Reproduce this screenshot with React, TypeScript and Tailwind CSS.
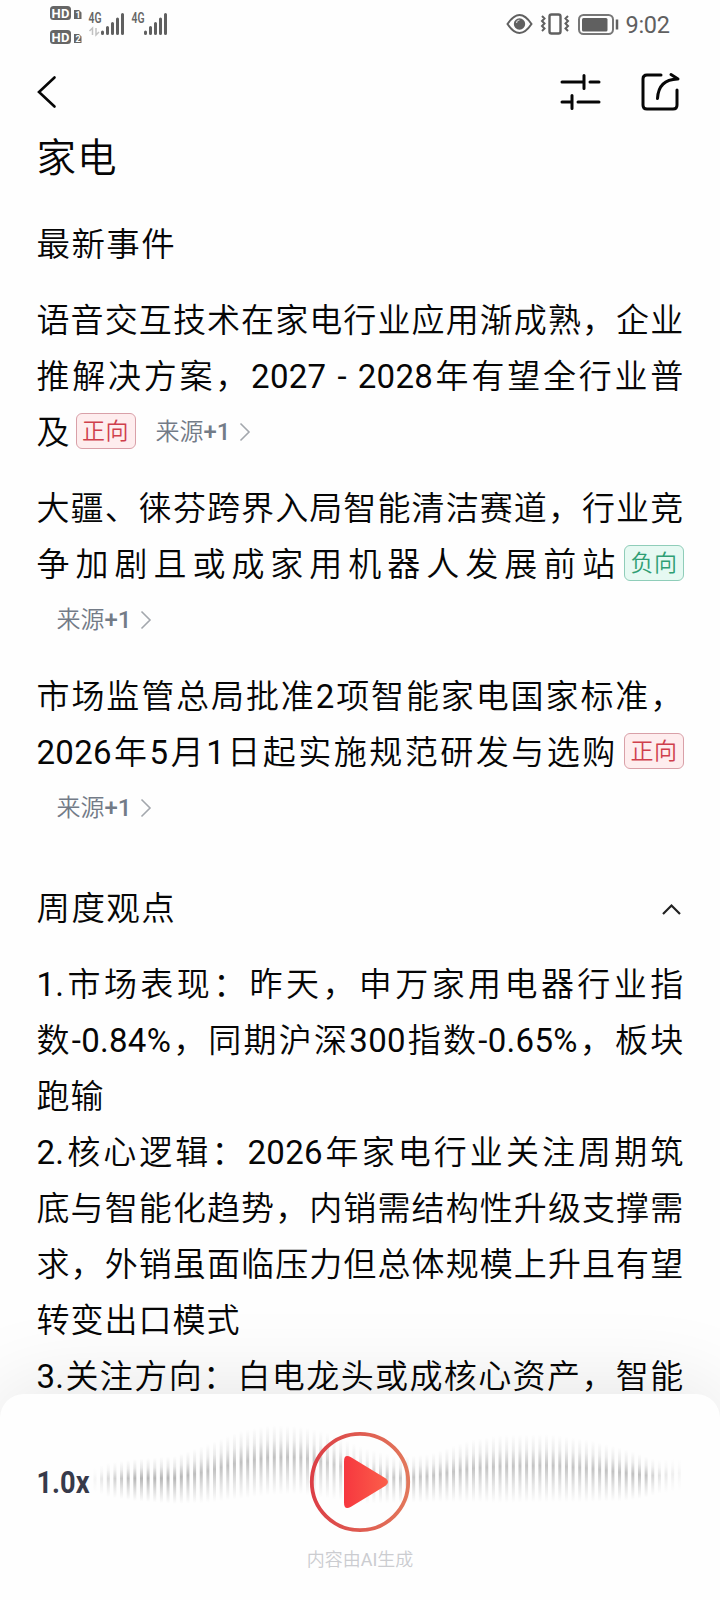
import React from "react";

const CJK = "font-['Roboto','Noto_Sans_CJK_SC',sans-serif]";

// Latin runs are set in the regular weight, Chinese text in the demi-light one
function Mixed({ text }: { text: string }) {
  return (
    <>
      {text.split(/([0-9A-Za-z.%-]+(?: - [0-9]+)?)/).map((run, i) =>
        i % 2 ? (
          <span key={i} className="font-normal">
            {run}
          </span>
        ) : (
          run
        ),
      )}
    </>
  );
}

function Line({ children, end = false }: { children: React.ReactNode; end?: boolean }) {
  return (
    <div
      className={
        end
          ? "flex h-14 items-center whitespace-pre tracking-[1px]"
          : "h-14 w-[647px] whitespace-pre leading-[56px] [text-align-last:justify]"
      }
    >
      {typeof children === "string" ? <Mixed text={children} /> : children}
    </div>
  );
}

function Tag({ kind }: { kind: "up" | "down" }) {
  const tone =
    kind === "up"
      ? "border-[#d9a0a8] bg-[#feedee] text-[#cf3f4c]"
      : "border-[#8fcdb9] bg-[#e6f9f2] text-[#2f9e74]";
  return (
    <span
      className={`mb-1 inline-flex h-9 w-[60px] shrink-0 items-center justify-center rounded-[6px] border text-[23px] leading-none tracking-[0.5px] ${tone}`}
    >
      {kind === "up" ? "正向" : "负向"}
    </span>
  );
}

function TaggedLine({ text, kind }: { text: string; kind: "up" | "down" }) {
  return (
    <div className="flex h-14 w-[647.5px] items-center justify-between">
      <span className="w-[579px] whitespace-pre leading-[56px] [text-align-last:justify]">
        <Mixed text={text} />
      </span>
      <Tag kind={kind} />
    </div>
  );
}

function Source() {
  return (
    <span className="mb-[2px] ml-5 inline-flex items-center text-[24px] leading-none tracking-normal text-[#737b87]">
      来源<span className="font-medium">+1</span>
      <svg width="12" height="20" viewBox="0 0 12 20" className="ml-[9px]" fill="none" stroke="#a3a7ad" strokeWidth="1.6">
        <path d="M1.5 1.5 10 10 1.5 18.5" />
      </svg>
    </span>
  );
}

function StatusBar() {
  return (
    <svg width="720" height="50" viewBox="0 0 720 50" className="block shrink-0" fill="none">
      <g fontFamily="Roboto" fontWeight="700" fill="#fff" fontSize="13">
        <rect x="50" y="6" width="21" height="14" rx="3.5" fill="#666" />
        <text x="51.5" y="17.6" textLength="18">HD</text>
        <rect x="50" y="30" width="21" height="14" rx="3.5" fill="#666" />
        <text x="51.5" y="41.6" textLength="18">HD</text>
        <path d="M74 10h5l2.500 2.500V19H74zM74 34h5l2.500 2.500V43H74z" fill="#666" />
        <text x="75.500" y="17.800" fontSize="9">1</text>
        <text x="75.500" y="41.800" fontSize="9">2</text>
      </g>
      <g fontFamily="Roboto" fontWeight="600" fill="#666" fontSize="14">
        <text x="88.500" y="23" textLength="13" lengthAdjust="spacingAndGlyphs">4G</text>
        <text x="131.500" y="23" textLength="13" lengthAdjust="spacingAndGlyphs">4G</text>
      </g>
      <path d="M92.500 35v-7l-3 3M96 28v7l3-3" stroke="#c2c2c2" strokeWidth="1.500" />
      <g stroke="#606060" strokeWidth="3" strokeLinecap="round">
        <path d="M102.500 32v1.500M107.500 27.500v6M112.500 23.500v10M117.500 19v14.500M122.500 14.500v19" />
        <path d="M145.500 32v1.500M150.500 27.500v6M155.500 23.500v10M160.500 19v14.500M165.500 14.500v19" />
      </g>
      <g stroke="#606060" strokeWidth="2">
        <path d="M507.500 24q12-18 24 0q-12 18-24 0Z" />
        <circle cx="519.500" cy="24" r="5.700" fill="#606060" stroke="none" />
        <path d="M516.500 23q0-2.500 3-3" stroke="#ccc" strokeWidth="1.200" />
        <rect x="549.500" y="14.500" width="11" height="19" rx="2" strokeWidth="2.400" />
        <path d="m542 16 2.500 2.500-2.500 2.500 2.500 2.500-2.500 2.500 2.500 2.500-2.500 2.500M568 16l-2.500 2.500 2.500 2.500-2.500 2.500 2.500 2.500-2.500 2.500 2.500 2.500" />
        <rect x="579" y="15" width="34" height="19" rx="4.500" stroke="#777" />
        <rect x="582" y="18" width="25.500" height="13.500" rx="1.500" fill="#606060" stroke="none" />
        <path d="M617 19.500v10" strokeWidth="2.500" />
      </g>
      <text x="625.500" y="33" fontFamily="Roboto" fontWeight="400" fontSize="23.500" fill="#606060" textLength="44.500">9:02</text>
    </svg>
  );
}

// Wave envelope: x, centre, half height, opacity
const STOPS: [number, number, number, number][] = [
  [94, 1480, 12, 0.1],
  [108, 1480, 17, 0.5],
  [135, 1480, 21, 1],
  [175, 1480, 24, 1],
  [205, 1474, 29, 0.85],
  [240, 1465, 34, 0.85],
  [270, 1460, 35, 0.85],
  [300, 1460, 34, 0.8],
  [330, 1466, 33, 0.7],
  [365, 1476, 28, 0.65],
  [400, 1480, 23, 0.75],
  [430, 1478, 24, 0.8],
  [470, 1471, 31, 0.8],
  [500, 1469, 34, 0.8],
  [550, 1468, 34, 0.8],
  [590, 1471, 31, 0.8],
  [625, 1475, 26, 0.85],
  [645, 1477, 21, 0.85],
  [658, 1477, 17, 0.4],
  [685, 1474, 16, 0.05],
];

function sample(x: number) {
  const i = Math.max(0, STOPS.findIndex((s, k) => k + 1 < STOPS.length && x <= STOPS[k + 1][0]));
  const a = STOPS[i];
  const b = STOPS[i + 1];
  const t = (x - a[0]) / (b[0] - a[0]);
  return [1, 2, 3].map((k) => a[k] + (b[k] - a[k]) * t);
}

function Player() {
  const bars: number[] = [];
  for (let x = 95; x < 685; x += 6.64) bars.push(x);
  return (
    <div className="relative h-[206px] w-full shrink-0 rounded-t-[24px] bg-[#fefefe] shadow-[0_0_90px_rgba(0,0,0,0.115)]">
      <svg width="720" height="206" viewBox="0 1394 720 206" fill="none" className="block">
        <defs>
          <linearGradient id="bar" x1="0" y1="0" x2="0" y2="1">
            <stop offset="0" stopColor="#aaa" stopOpacity="0" />
            <stop offset=".22" stopColor="#aaa" stopOpacity=".25" />
            <stop offset=".46" stopColor="#a4a4a4" stopOpacity=".8" />
            <stop offset=".75" stopColor="#aaa" stopOpacity=".35" />
            <stop offset="1" stopColor="#aaa" stopOpacity="0" />
          </linearGradient>
          <linearGradient id="ring" x1="0" y1="0" x2="1" y2="0">
            <stop stopColor="#dc3f46" />
            <stop offset="1" stopColor="#e2775b" />
          </linearGradient>
          <linearGradient id="play" x1="0" y1="0" x2="1" y2="0">
            <stop stopColor="#f6373f" />
            <stop offset="1" stopColor="#fb5f4a" />
          </linearGradient>
        </defs>
        {bars.map((x) => {
          const [c, h, o] = sample(x);
          return <rect key={x} x={x - 1.5} y={c - h} width="3" height={h * 2} fill="url(#bar)" opacity={o} />;
        })}
        <circle cx="360" cy="1482" r="48.2" stroke="url(#ring)" strokeWidth="3.8" />
        <path
          d="M344 1461.500q0-8 7-4.200l34.500 21q5 3.700 0 7.400l-34.500 21q-7 4-7-4.200z"
          fill="url(#play)"
        />
        <text x="36.500" y="1492.500" fontFamily="Roboto" fontWeight="700" fontSize="32" fill="#373a4a" textLength="53" lengthAdjust="spacingAndGlyphs">
          1.0x
        </text>
      </svg>
      <div className="absolute inset-x-0 top-[153px] text-center text-[18px] leading-[26px] text-[#cbccd0]">
        <Mixed text="内容由AI生成" />
      </div>
    </div>
  );
}

export default function App() {
  return (
    <div className={`flex h-[1600px] w-[720px] flex-col overflow-hidden bg-[#fefefe] font-[350] text-[#060606] ${CJK}`}>
      <div className="flex h-[1394px] shrink-0 flex-col">
        <StatusBar />
        <div className="flex h-[84px] shrink-0 items-center justify-between pr-[38px] pl-[36px]">
          <svg width="22" height="34" viewBox="0 0 22 34" fill="none" stroke="#060606" strokeWidth="2.600">
            <path d="M18.500 2.500 3 17l15.500 14.500" strokeLinecap="round" />
          </svg>
          <svg width="122" height="40" viewBox="560 72 122 40" fill="none" stroke="#060606" strokeWidth="3" strokeLinecap="round" strokeLinejoin="round">
            <path d="M562 82h21M584 75.500v13M590 82h9M562 102h9M572 95.500v13M578 102h21" />
            <path d="M661 75h-14q-4 0-4 4v26q0 4 4 4h26q4 0 4-4v-15" />
            <path d="M657.500 98.500q1-19 20-19.500M671 74.500l7 4.500" />
          </svg>
        </div>
        <main className="shrink-0 pt-px pl-[36.500px] text-[33px] tracking-[0.3px]">
          <h1 className="h-12 text-[39.500px] leading-[48px] tracking-[1px]">家电</h1>
          <h2 className="mt-[34px] h-14 text-[33.500px] leading-[56px] tracking-[1.4px]">最新事件</h2>
          <section className="mt-5 flex flex-col gap-5">
            <div>
              <Line>语音交互技术在家电行业应用渐成熟，企业</Line>
              <Line>推解决方案，2027 - 2028年有望全行业普</Line>
              <Line end>及<span className="ml-[5px] inline-flex"><Tag kind="up" /></span><Source /></Line>
            </div>
            <div>
              <Line>大疆、徕芬跨界入局智能清洁赛道，行业竞</Line>
              <TaggedLine text="争加剧且或成家用机器人发展前站" kind="down" />
              <Line end><Source /></Line>
            </div>
            <div>
              <Line>市场监管总局批准2项智能家电国家标准，</Line>
              <TaggedLine text="2026年5月1日起实施规范研发与选购" kind="up" />
              <Line end><Source /></Line>
            </div>
          </section>
          <div className="mt-[44px] flex h-14 w-[646px] items-center justify-between">
            <h2 className="text-[33.500px] tracking-[1.400px]">周度观点</h2>
            <svg width="22" height="14" viewBox="0 0 22 14" fill="none" stroke="#222" strokeWidth="2.200">
              <path d="m2 12 8.500-8.500L19 12" />
            </svg>
          </div>
          <section className="mt-5">
            <Line>1.市场表现：昨天，申万家用电器行业指</Line>
            <Line>数-0.84%，同期沪深300指数-0.65%，板块</Line>
            <Line end>跑输</Line>
            <Line>2.核心逻辑：2026年家电行业关注周期筑</Line>
            <Line>底与智能化趋势，内销需结构性升级支撑需</Line>
            <Line>求，外销虽面临压力但总体规模上升且有望</Line>
            <Line end>转变出口模式</Line>
            <Line>3.关注方向：白电龙头或成核心资产，智能</Line>
          </section>
        </main>
      </div>
      <Player />
    </div>
  );
}
